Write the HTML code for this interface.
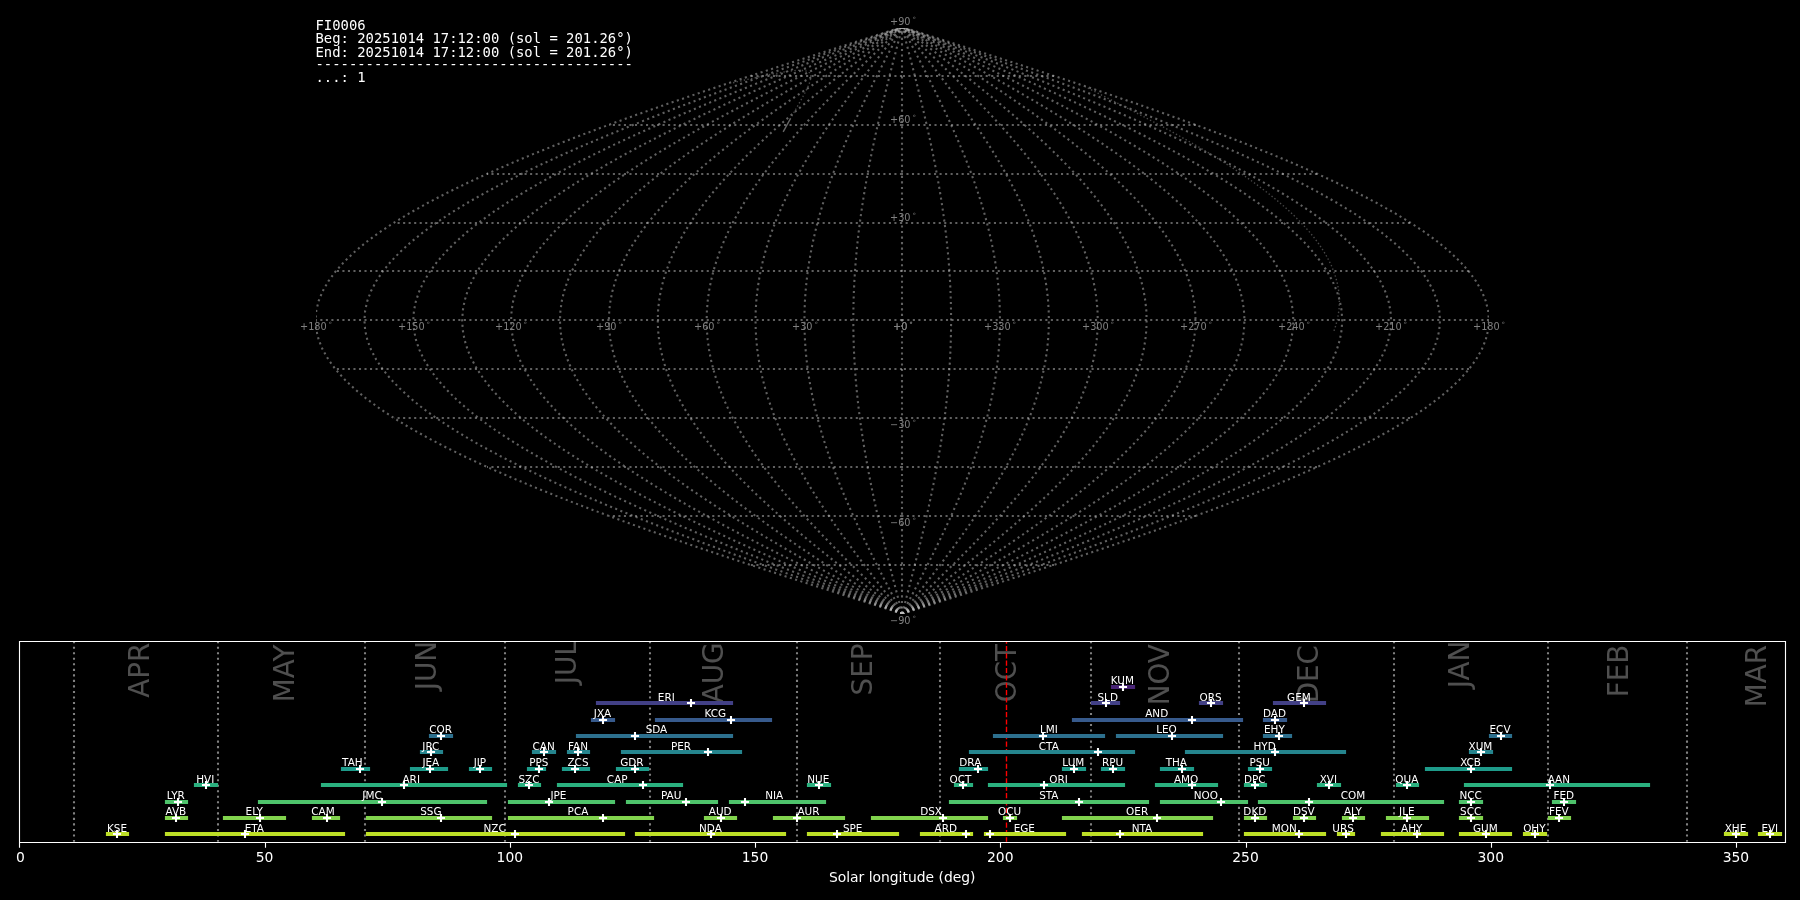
<!DOCTYPE html>
<html lang="en">
<head>
<meta charset="utf-8">
<title>FI0006 shower association</title>
<style>
html,body{margin:0;padding:0;background:#000;}
body{width:1800px;height:900px;overflow:hidden;}
svg{display:block;will-change:transform;}
text{font-family:"DejaVu Sans","Liberation Sans",sans-serif;}
.mono text{font-family:"DejaVu Sans Mono","Liberation Mono",monospace;}
</style>
</head>
<body>
<svg width="1800" height="900" viewBox="0 0 1800 900" role="img" aria-label="All-sky shower association plot for station FI0006 with yearly meteor shower activity diagram">
<rect width="1800" height="900" fill="#000"/>
<clipPath id="skyclip"><rect x="316" y="28" width="1173" height="586"/></clipPath>
<g id="grid" clip-path="url(#skyclip)" fill="none" stroke="#c0c0c0" stroke-opacity="0.5" stroke-width="2.083" stroke-dasharray="2.083 3.437">
<path d="M902 614V27"/>
<polyline points="902.2,613.73 899.64,603.95 897.09,594.17 894.55,584.39 892.03,574.61 889.55,564.84 887.09,555.06 884.68,545.28 882.31,535.5 880,525.72 877.75,515.94 875.57,506.17 873.46,496.39 871.43,486.61 869.49,476.83 867.63,467.05 865.87,457.27 864.2,447.5 862.65,437.72 861.2,427.94 859.86,418.16 858.64,408.38 857.54,398.61 856.56,388.83 855.7,379.05 854.97,369.27 854.38,359.49 853.91,349.71 853.58,339.94 853.38,330.16 853.31,320.38 853.38,310.6 853.58,300.82 853.91,291.05 854.38,281.27 854.97,271.49 855.7,261.71 856.56,251.93 857.54,242.15 858.64,232.38 859.86,222.6 861.2,212.82 862.65,203.04 864.2,193.26 865.87,183.49 867.63,173.71 869.49,163.93 871.43,154.15 873.46,144.37 875.57,134.59 877.75,124.82 880,115.04 882.31,105.26 884.68,95.48 887.09,85.7 889.55,75.93 892.03,66.15 894.55,56.37 897.09,46.59 899.64,36.81 902.2,27.03"/>
<polyline points="902.2,613.73 897.08,603.95 891.98,594.17 886.9,584.39 881.87,574.61 876.89,564.84 871.98,555.06 867.16,545.28 862.43,535.5 857.81,525.72 853.31,515.94 848.94,506.17 844.73,496.39 840.66,486.61 836.77,476.83 833.06,467.05 829.53,457.27 826.21,447.5 823.09,437.72 820.19,427.94 817.52,418.16 815.08,408.38 812.87,398.61 810.91,388.83 809.2,379.05 807.75,369.27 806.55,359.49 805.62,349.71 804.95,339.94 804.55,330.16 804.42,320.38 804.55,310.6 804.95,300.82 805.62,291.05 806.55,281.27 807.75,271.49 809.2,261.71 810.91,251.93 812.87,242.15 815.08,232.38 817.52,222.6 820.19,212.82 823.09,203.04 826.21,193.26 829.53,183.49 833.06,173.71 836.77,163.93 840.66,154.15 844.73,144.37 848.94,134.59 853.31,124.82 857.81,115.04 862.43,105.26 867.16,95.48 871.98,85.7 876.89,75.93 881.87,66.15 886.9,56.37 891.98,46.59 897.08,36.81 902.2,27.03"/>
<polyline points="902.2,613.73 894.52,603.95 886.87,594.17 879.26,584.39 871.7,574.61 864.24,564.84 856.88,555.06 849.64,545.28 842.54,535.5 835.61,525.72 828.86,515.94 822.32,506.17 815.99,496.39 809.9,486.61 804.06,476.83 798.49,467.05 793.2,457.27 788.21,447.5 783.54,437.72 779.19,427.94 775.18,418.16 771.51,408.38 768.21,398.61 765.27,388.83 762.71,379.05 760.52,369.27 758.73,359.49 757.33,349.71 756.33,339.94 755.73,330.16 755.53,320.38 755.73,310.6 756.33,300.82 757.33,291.05 758.73,281.27 760.52,271.49 762.71,261.71 765.27,251.93 768.21,242.15 771.51,232.38 775.18,222.6 779.19,212.82 783.54,203.04 788.21,193.26 793.2,183.49 798.49,173.71 804.06,163.93 809.9,154.15 815.99,144.37 822.32,134.59 828.86,124.82 835.61,115.04 842.54,105.26 849.64,95.48 856.88,85.7 864.24,75.93 871.7,66.15 879.26,56.37 886.87,46.59 894.52,36.81 902.2,27.03"/>
<polyline points="902.2,613.73 891.96,603.95 881.76,594.17 871.61,584.39 861.54,574.61 851.58,564.84 841.77,555.06 832.12,545.28 822.66,535.5 813.42,525.72 804.42,515.94 795.69,506.17 787.25,496.39 779.13,486.61 771.34,476.83 763.92,467.05 756.87,457.27 750.22,447.5 743.99,437.72 738.19,427.94 732.84,418.16 727.95,408.38 723.54,398.61 719.63,388.83 716.21,379.05 713.3,369.27 710.91,359.49 709.04,349.71 707.71,339.94 706.9,330.16 706.64,320.38 706.9,310.6 707.71,300.82 709.04,291.05 710.91,281.27 713.3,271.49 716.21,261.71 719.63,251.93 723.54,242.15 727.95,232.38 732.84,222.6 738.19,212.82 743.99,203.04 750.22,193.26 756.87,183.49 763.92,173.71 771.34,163.93 779.13,154.15 787.25,144.37 795.69,134.59 804.42,124.82 813.42,115.04 822.66,105.26 832.12,95.48 841.77,85.7 851.58,75.93 861.54,66.15 871.61,56.37 881.76,46.59 891.96,36.81 902.2,27.03"/>
<polyline points="902.2,613.73 889.41,603.95 876.65,594.17 863.96,584.39 851.37,574.61 838.93,564.84 826.66,555.06 814.6,545.28 802.77,535.5 791.22,525.72 779.97,515.94 769.06,506.17 758.51,496.39 748.36,486.61 738.63,476.83 729.34,467.05 720.53,457.27 712.22,447.5 704.43,437.72 697.18,427.94 690.5,418.16 684.39,408.38 678.88,398.61 673.98,388.83 669.71,379.05 666.07,369.27 663.09,359.49 660.75,349.71 659.08,339.94 658.08,330.16 657.75,320.38 658.08,310.6 659.08,300.82 660.75,291.05 663.09,281.27 666.07,271.49 669.71,261.71 673.98,251.93 678.88,242.15 684.39,232.38 690.5,222.6 697.18,212.82 704.43,203.04 712.22,193.26 720.53,183.49 729.34,173.71 738.63,163.93 748.36,154.15 758.51,144.37 769.06,134.59 779.97,124.82 791.22,115.04 802.77,105.26 814.6,95.48 826.66,85.7 838.93,75.93 851.37,66.15 863.96,56.37 876.65,46.59 889.41,36.81 902.2,27.03"/>
<polyline points="902.2,613.73 886.85,603.95 871.54,594.17 856.31,584.39 841.21,574.61 826.28,564.84 811.55,555.06 797.07,545.28 782.89,535.5 769.02,525.72 755.53,515.94 742.43,506.17 729.78,496.39 717.59,486.61 705.91,476.83 694.77,467.05 684.2,457.27 674.23,447.5 664.88,437.72 656.18,427.94 648.15,418.16 640.83,408.38 634.22,398.61 628.34,388.83 623.21,379.05 618.85,369.27 615.26,359.49 612.47,349.71 610.46,339.94 609.26,330.16 608.85,320.38 609.26,310.6 610.46,300.82 612.47,291.05 615.26,281.27 618.85,271.49 623.21,261.71 628.34,251.93 634.22,242.15 640.83,232.38 648.15,222.6 656.18,212.82 664.88,203.04 674.23,193.26 684.2,183.49 694.77,173.71 705.91,163.93 717.59,154.15 729.78,144.37 742.43,134.59 755.53,124.82 769.02,115.04 782.89,105.26 797.07,95.48 811.55,85.7 826.28,75.93 841.21,66.15 856.31,56.37 871.54,46.59 886.85,36.81 902.2,27.03"/>
<polyline points="902.2,613.73 884.29,603.95 866.43,594.17 848.66,584.39 831.04,574.61 813.62,564.84 796.44,555.06 779.55,545.28 763,535.5 746.83,525.72 731.08,515.94 715.8,506.17 701.04,496.39 686.82,486.61 673.2,476.83 660.2,467.05 647.87,457.27 636.23,447.5 625.32,437.72 615.18,427.94 605.81,418.16 597.26,408.38 589.55,398.61 582.69,388.83 576.71,379.05 571.62,369.27 567.44,359.49 564.18,349.71 561.84,339.94 560.43,330.16 559.96,320.38 560.43,310.6 561.84,300.82 564.18,291.05 567.44,281.27 571.62,271.49 576.71,261.71 582.69,251.93 589.55,242.15 597.26,232.38 605.81,222.6 615.18,212.82 625.32,203.04 636.23,193.26 647.87,183.49 660.2,173.71 673.2,163.93 686.82,154.15 701.04,144.37 715.8,134.59 731.08,124.82 746.83,115.04 763,105.26 779.55,95.48 796.44,85.7 813.62,75.93 831.04,66.15 848.66,56.37 866.43,46.59 884.29,36.81 902.2,27.03"/>
<polyline points="902.2,613.73 881.73,603.95 861.32,594.17 841.01,584.39 820.88,574.61 800.97,564.84 781.33,555.06 762.03,545.28 743.11,535.5 724.63,525.72 706.64,515.94 689.18,506.17 672.3,496.39 656.06,486.61 640.48,476.83 625.63,467.05 611.54,457.27 598.24,447.5 585.77,437.72 574.17,427.94 563.47,418.16 553.7,408.38 544.89,398.61 537.05,388.83 530.22,379.05 524.4,369.27 519.62,359.49 515.89,349.71 513.21,339.94 511.61,330.16 511.07,320.38 511.61,310.6 513.21,300.82 515.89,291.05 519.62,281.27 524.4,271.49 530.22,261.71 537.05,251.93 544.89,242.15 553.7,232.38 563.47,222.6 574.17,212.82 585.77,203.04 598.24,193.26 611.54,183.49 625.63,173.71 640.48,163.93 656.06,154.15 672.3,144.37 689.18,134.59 706.64,124.82 724.63,115.04 743.11,105.26 762.03,95.48 781.33,85.7 800.97,75.93 820.88,66.15 841.01,56.37 861.32,46.59 881.73,36.81 902.2,27.03"/>
<polyline points="902.2,613.73 879.17,603.95 856.21,594.17 833.37,584.39 810.71,574.61 788.31,564.84 766.23,555.06 744.51,545.28 723.23,535.5 702.44,525.72 682.19,515.94 662.55,506.17 643.56,496.39 625.29,486.61 607.77,476.83 591.06,467.05 575.2,457.27 560.24,447.5 546.22,437.72 533.17,427.94 521.13,418.16 510.14,408.38 500.22,398.61 491.41,388.83 483.72,379.05 477.17,369.27 471.8,359.49 467.6,349.71 464.59,339.94 462.78,330.16 462.18,320.38 462.78,310.6 464.59,300.82 467.6,291.05 471.8,281.27 477.17,271.49 483.72,261.71 491.41,251.93 500.22,242.15 510.14,232.38 521.13,222.6 533.17,212.82 546.22,203.04 560.24,193.26 575.2,183.49 591.06,173.71 607.77,163.93 625.29,154.15 643.56,144.37 662.55,134.59 682.19,124.82 702.44,115.04 723.23,105.26 744.51,95.48 766.23,85.7 788.31,75.93 810.71,66.15 833.37,56.37 856.21,46.59 879.17,36.81 902.2,27.03"/>
<polyline points="902.2,613.73 876.61,603.95 851.09,594.17 825.72,584.39 800.55,574.61 775.66,564.84 751.12,555.06 726.99,545.28 703.34,535.5 680.24,525.72 657.75,515.94 635.92,506.17 614.83,496.39 594.52,486.61 575.06,476.83 556.49,467.05 538.87,457.27 522.25,447.5 506.66,437.72 492.17,427.94 478.79,418.16 466.58,408.38 455.56,398.61 445.76,388.83 437.22,379.05 429.95,369.27 423.97,359.49 419.31,349.71 415.97,339.94 413.96,330.16 413.29,320.38 413.96,310.6 415.97,300.82 419.31,291.05 423.97,281.27 429.95,271.49 437.22,261.71 445.76,251.93 455.56,242.15 466.58,232.38 478.79,222.6 492.17,212.82 506.66,203.04 522.25,193.26 538.87,183.49 556.49,173.71 575.06,163.93 594.52,154.15 614.83,144.37 635.92,134.59 657.75,124.82 680.24,115.04 703.34,105.26 726.99,95.48 751.12,85.7 775.66,75.93 800.55,66.15 825.72,56.37 851.09,46.59 876.61,36.81 902.2,27.03"/>
<polyline points="902.2,613.73 874.05,603.95 845.98,594.17 818.07,584.39 790.38,574.61 763.01,564.84 736.01,555.06 709.47,545.28 683.46,535.5 658.04,525.72 633.3,515.94 609.29,506.17 586.09,496.39 563.75,486.61 542.34,476.83 521.92,467.05 502.54,457.27 484.25,447.5 467.11,437.72 451.16,427.94 436.45,418.16 423.02,408.38 410.89,398.61 400.12,388.83 390.72,379.05 382.72,369.27 376.15,359.49 371.02,349.71 367.35,339.94 365.14,330.16 364.4,320.38 365.14,310.6 367.35,300.82 371.02,291.05 376.15,281.27 382.72,271.49 390.72,261.71 400.12,251.93 410.89,242.15 423.02,232.38 436.45,222.6 451.16,212.82 467.11,203.04 484.25,193.26 502.54,183.49 521.92,173.71 542.34,163.93 563.75,154.15 586.09,144.37 609.29,134.59 633.3,124.82 658.04,115.04 683.46,105.26 709.47,95.48 736.01,85.7 763.01,75.93 790.38,66.15 818.07,56.37 845.98,46.59 874.05,36.81 902.2,27.03"/>
<polyline points="902.2,613.73 871.49,603.95 840.87,594.17 810.42,584.39 780.22,574.61 750.35,564.84 720.9,555.06 691.95,545.28 663.57,535.5 635.85,525.72 608.85,515.94 582.66,506.17 557.35,496.39 532.98,486.61 509.63,476.83 487.35,467.05 466.2,457.27 446.25,447.5 427.56,437.72 410.16,427.94 394.11,418.16 379.45,408.38 366.23,398.61 354.48,388.83 344.22,379.05 335.5,369.27 328.33,359.49 322.73,349.71 318.72,339.94 316.31,330.16 315.51,320.38 316.31,310.6 318.72,300.82 322.73,291.05 328.33,281.27 335.5,271.49 344.22,261.71 354.48,251.93 366.23,242.15 379.45,232.38 394.11,222.6 410.16,212.82 427.56,203.04 446.25,193.26 466.2,183.49 487.35,173.71 509.63,163.93 532.98,154.15 557.35,144.37 582.66,134.59 608.85,124.82 635.85,115.04 663.57,105.26 691.95,95.48 720.9,85.7 750.35,75.93 780.22,66.15 810.42,56.37 840.87,46.59 871.49,36.81 902.2,27.03"/>
<polyline points="902.2,613.73 932.91,603.95 963.53,594.17 993.98,584.39 1024.18,574.61 1054.05,564.84 1083.5,555.06 1112.45,545.28 1140.83,535.5 1168.55,525.72 1195.55,515.94 1221.74,506.17 1247.05,496.39 1271.42,486.61 1294.77,476.83 1317.05,467.05 1338.2,457.27 1358.15,447.5 1376.84,437.72 1394.24,427.94 1410.29,418.16 1424.95,408.38 1438.17,398.61 1449.92,388.83 1460.18,379.05 1468.9,369.27 1476.07,359.49 1481.67,349.71 1485.68,339.94 1488.09,330.16 1488.89,320.38 1488.09,310.6 1485.68,300.82 1481.67,291.05 1476.07,281.27 1468.9,271.49 1460.18,261.71 1449.92,251.93 1438.17,242.15 1424.95,232.38 1410.29,222.6 1394.24,212.82 1376.84,203.04 1358.15,193.26 1338.2,183.49 1317.05,173.71 1294.77,163.93 1271.42,154.15 1247.05,144.37 1221.74,134.59 1195.55,124.82 1168.55,115.04 1140.83,105.26 1112.45,95.48 1083.5,85.7 1054.05,75.93 1024.18,66.15 993.98,56.37 963.53,46.59 932.91,36.81 902.2,27.03"/>
<polyline points="902.2,613.73 930.35,603.95 958.42,594.17 986.33,584.39 1014.02,574.61 1041.39,564.84 1068.39,555.06 1094.93,545.28 1120.94,535.5 1146.36,525.72 1171.1,515.94 1195.11,506.17 1218.31,496.39 1240.65,486.61 1262.06,476.83 1282.48,467.05 1301.86,457.27 1320.15,447.5 1337.29,437.72 1353.24,427.94 1367.95,418.16 1381.38,408.38 1393.51,398.61 1404.28,388.83 1413.68,379.05 1421.68,369.27 1428.25,359.49 1433.38,349.71 1437.05,339.94 1439.26,330.16 1440,320.38 1439.26,310.6 1437.05,300.82 1433.38,291.05 1428.25,281.27 1421.68,271.49 1413.68,261.71 1404.28,251.93 1393.51,242.15 1381.38,232.38 1367.95,222.6 1353.24,212.82 1337.29,203.04 1320.15,193.26 1301.86,183.49 1282.48,173.71 1262.06,163.93 1240.65,154.15 1218.31,144.37 1195.11,134.59 1171.1,124.82 1146.36,115.04 1120.94,105.26 1094.93,95.48 1068.39,85.7 1041.39,75.93 1014.02,66.15 986.33,56.37 958.42,46.59 930.35,36.81 902.2,27.03"/>
<polyline points="902.2,613.73 927.79,603.95 953.31,594.17 978.68,584.39 1003.85,574.61 1028.74,564.84 1053.28,555.06 1077.41,545.28 1101.06,535.5 1124.16,525.72 1146.66,515.94 1168.48,506.17 1189.57,496.39 1209.88,486.61 1229.34,476.83 1247.91,467.05 1265.53,457.27 1282.15,447.5 1297.74,437.72 1312.23,427.94 1325.61,418.16 1337.82,408.38 1348.84,398.61 1358.64,388.83 1367.18,379.05 1374.45,369.27 1380.43,359.49 1385.09,349.71 1388.43,339.94 1390.44,330.16 1391.11,320.38 1390.44,310.6 1388.43,300.82 1385.09,291.05 1380.43,281.27 1374.45,271.49 1367.18,261.71 1358.64,251.93 1348.84,242.15 1337.82,232.38 1325.61,222.6 1312.23,212.82 1297.74,203.04 1282.15,193.26 1265.53,183.49 1247.91,173.71 1229.34,163.93 1209.88,154.15 1189.57,144.37 1168.48,134.59 1146.66,124.82 1124.16,115.04 1101.06,105.26 1077.41,95.48 1053.28,85.7 1028.74,75.93 1003.85,66.15 978.68,56.37 953.31,46.59 927.79,36.81 902.2,27.03"/>
<polyline points="902.2,613.73 925.23,603.95 948.19,594.17 971.03,584.39 993.69,574.61 1016.09,564.84 1038.17,555.06 1059.89,545.28 1081.17,535.5 1101.96,525.72 1122.21,515.94 1141.85,506.17 1160.84,496.39 1179.11,486.61 1196.63,476.83 1213.34,467.05 1229.2,457.27 1244.16,447.5 1258.18,437.72 1271.23,427.94 1283.27,418.16 1294.26,408.38 1304.18,398.61 1312.99,388.83 1320.68,379.05 1327.23,369.27 1332.6,359.49 1336.8,349.71 1339.81,339.94 1341.62,330.16 1342.22,320.38 1341.62,310.6 1339.81,300.82 1336.8,291.05 1332.6,281.27 1327.23,271.49 1320.68,261.71 1312.99,251.93 1304.18,242.15 1294.26,232.38 1283.27,222.6 1271.23,212.82 1258.18,203.04 1244.16,193.26 1229.2,183.49 1213.34,173.71 1196.63,163.93 1179.11,154.15 1160.84,144.37 1141.85,134.59 1122.21,124.82 1101.96,115.04 1081.17,105.26 1059.89,95.48 1038.17,85.7 1016.09,75.93 993.69,66.15 971.03,56.37 948.19,46.59 925.23,36.81 902.2,27.03"/>
<polyline points="902.2,613.73 922.67,603.95 943.08,594.17 963.39,584.39 983.52,574.61 1003.43,564.84 1023.07,555.06 1042.37,545.28 1061.29,535.5 1079.77,525.72 1097.76,515.94 1115.22,506.17 1132.1,496.39 1148.34,486.61 1163.92,476.83 1178.77,467.05 1192.86,457.27 1206.16,447.5 1218.63,437.72 1230.23,427.94 1240.93,418.16 1250.7,408.38 1259.51,398.61 1267.35,388.83 1274.18,379.05 1280,369.27 1284.78,359.49 1288.51,349.71 1291.19,339.94 1292.79,330.16 1293.33,320.38 1292.79,310.6 1291.19,300.82 1288.51,291.05 1284.78,281.27 1280,271.49 1274.18,261.71 1267.35,251.93 1259.51,242.15 1250.7,232.38 1240.93,222.6 1230.23,212.82 1218.63,203.04 1206.16,193.26 1192.86,183.49 1178.77,173.71 1163.92,163.93 1148.34,154.15 1132.1,144.37 1115.22,134.59 1097.76,124.82 1079.77,115.04 1061.29,105.26 1042.37,95.48 1023.07,85.7 1003.43,75.93 983.52,66.15 963.39,56.37 943.08,46.59 922.67,36.81 902.2,27.03"/>
<polyline points="902.2,613.73 920.11,603.95 937.97,594.17 955.74,584.39 973.36,574.61 990.78,564.84 1007.96,555.06 1024.85,545.28 1041.4,535.5 1057.57,525.72 1073.32,515.94 1088.6,506.17 1103.36,496.39 1117.58,486.61 1131.2,476.83 1144.2,467.05 1156.53,457.27 1168.17,447.5 1179.08,437.72 1189.22,427.94 1198.59,418.16 1207.14,408.38 1214.85,398.61 1221.71,388.83 1227.69,379.05 1232.78,369.27 1236.96,359.49 1240.22,349.71 1242.56,339.94 1243.97,330.16 1244.44,320.38 1243.97,310.6 1242.56,300.82 1240.22,291.05 1236.96,281.27 1232.78,271.49 1227.69,261.71 1221.71,251.93 1214.85,242.15 1207.14,232.38 1198.59,222.6 1189.22,212.82 1179.08,203.04 1168.17,193.26 1156.53,183.49 1144.2,173.71 1131.2,163.93 1117.58,154.15 1103.36,144.37 1088.6,134.59 1073.32,124.82 1057.57,115.04 1041.4,105.26 1024.85,95.48 1007.96,85.7 990.78,75.93 973.36,66.15 955.74,56.37 937.97,46.59 920.11,36.81 902.2,27.03"/>
<polyline points="902.2,613.73 917.55,603.95 932.86,594.17 948.09,584.39 963.19,574.61 978.12,564.84 992.85,555.06 1007.33,545.28 1021.51,535.5 1035.38,525.72 1048.87,515.94 1061.97,506.17 1074.62,496.39 1086.81,486.61 1098.49,476.83 1109.63,467.05 1120.2,457.27 1130.17,447.5 1139.52,437.72 1148.22,427.94 1156.25,418.16 1163.57,408.38 1170.18,398.61 1176.06,388.83 1181.19,379.05 1185.55,369.27 1189.14,359.49 1191.93,349.71 1193.94,339.94 1195.14,330.16 1195.55,320.38 1195.14,310.6 1193.94,300.82 1191.93,291.05 1189.14,281.27 1185.55,271.49 1181.19,261.71 1176.06,251.93 1170.18,242.15 1163.57,232.38 1156.25,222.6 1148.22,212.82 1139.52,203.04 1130.17,193.26 1120.2,183.49 1109.63,173.71 1098.49,163.93 1086.81,154.15 1074.62,144.37 1061.97,134.59 1048.87,124.82 1035.38,115.04 1021.51,105.26 1007.33,95.48 992.85,85.7 978.12,75.93 963.19,66.15 948.09,56.37 932.86,46.59 917.55,36.81 902.2,27.03"/>
<polyline points="902.2,613.73 914.99,603.95 927.75,594.17 940.44,584.39 953.03,574.61 965.47,564.84 977.74,555.06 989.8,545.28 1001.63,535.5 1013.18,525.72 1024.43,515.94 1035.34,506.17 1045.89,496.39 1056.04,486.61 1065.77,476.83 1075.06,467.05 1083.87,457.27 1092.18,447.5 1099.97,437.72 1107.22,427.94 1113.9,418.16 1120.01,408.38 1125.52,398.61 1130.42,388.83 1134.69,379.05 1138.33,369.27 1141.31,359.49 1143.65,349.71 1145.32,339.94 1146.32,330.16 1146.65,320.38 1146.32,310.6 1145.32,300.82 1143.65,291.05 1141.31,281.27 1138.33,271.49 1134.69,261.71 1130.42,251.93 1125.52,242.15 1120.01,232.38 1113.9,222.6 1107.22,212.82 1099.97,203.04 1092.18,193.26 1083.87,183.49 1075.06,173.71 1065.77,163.93 1056.04,154.15 1045.89,144.37 1035.34,134.59 1024.43,124.82 1013.18,115.04 1001.63,105.26 989.8,95.48 977.74,85.7 965.47,75.93 953.03,66.15 940.44,56.37 927.75,46.59 914.99,36.81 902.2,27.03"/>
<polyline points="902.2,613.73 912.44,603.95 922.64,594.17 932.79,584.39 942.86,574.61 952.82,564.84 962.63,555.06 972.28,545.28 981.74,535.5 990.98,525.72 999.98,515.94 1008.71,506.17 1017.15,496.39 1025.27,486.61 1033.06,476.83 1040.48,467.05 1047.53,457.27 1054.18,447.5 1060.41,437.72 1066.21,427.94 1071.56,418.16 1076.45,408.38 1080.86,398.61 1084.77,388.83 1088.19,379.05 1091.1,369.27 1093.49,359.49 1095.36,349.71 1096.69,339.94 1097.5,330.16 1097.76,320.38 1097.5,310.6 1096.69,300.82 1095.36,291.05 1093.49,281.27 1091.1,271.49 1088.19,261.71 1084.77,251.93 1080.86,242.15 1076.45,232.38 1071.56,222.6 1066.21,212.82 1060.41,203.04 1054.18,193.26 1047.53,183.49 1040.48,173.71 1033.06,163.93 1025.27,154.15 1017.15,144.37 1008.71,134.59 999.98,124.82 990.98,115.04 981.74,105.26 972.28,95.48 962.63,85.7 952.82,75.93 942.86,66.15 932.79,56.37 922.64,46.59 912.44,36.81 902.2,27.03"/>
<polyline points="902.2,613.73 909.88,603.95 917.53,594.17 925.14,584.39 932.7,574.61 940.16,564.84 947.52,555.06 954.76,545.28 961.86,535.5 968.79,525.72 975.54,515.94 982.08,506.17 988.41,496.39 994.5,486.61 1000.34,476.83 1005.91,467.05 1011.2,457.27 1016.19,447.5 1020.86,437.72 1025.21,427.94 1029.22,418.16 1032.89,408.38 1036.19,398.61 1039.13,388.83 1041.69,379.05 1043.88,369.27 1045.67,359.49 1047.07,349.71 1048.07,339.94 1048.67,330.16 1048.87,320.38 1048.67,310.6 1048.07,300.82 1047.07,291.05 1045.67,281.27 1043.88,271.49 1041.69,261.71 1039.13,251.93 1036.19,242.15 1032.89,232.38 1029.22,222.6 1025.21,212.82 1020.86,203.04 1016.19,193.26 1011.2,183.49 1005.91,173.71 1000.34,163.93 994.5,154.15 988.41,144.37 982.08,134.59 975.54,124.82 968.79,115.04 961.86,105.26 954.76,95.48 947.52,85.7 940.16,75.93 932.7,66.15 925.14,56.37 917.53,46.59 909.88,36.81 902.2,27.03"/>
<polyline points="902.2,613.73 907.32,603.95 912.42,594.17 917.5,584.39 922.53,574.61 927.51,564.84 932.42,555.06 937.24,545.28 941.97,535.5 946.59,525.72 951.09,515.94 955.46,506.17 959.67,496.39 963.74,486.61 967.63,476.83 971.34,467.05 974.87,457.27 978.19,447.5 981.31,437.72 984.21,427.94 986.88,418.16 989.32,408.38 991.53,398.61 993.49,388.83 995.2,379.05 996.65,369.27 997.85,359.49 998.78,349.71 999.45,339.94 999.85,330.16 999.98,320.38 999.85,310.6 999.45,300.82 998.78,291.05 997.85,281.27 996.65,271.49 995.2,261.71 993.49,251.93 991.53,242.15 989.32,232.38 986.88,222.6 984.21,212.82 981.31,203.04 978.19,193.26 974.87,183.49 971.34,173.71 967.63,163.93 963.74,154.15 959.67,144.37 955.46,134.59 951.09,124.82 946.59,115.04 941.97,105.26 937.24,95.48 932.42,85.7 927.51,75.93 922.53,66.15 917.5,56.37 912.42,46.59 907.32,36.81 902.2,27.03"/>
<polyline points="902.2,613.73 904.76,603.95 907.31,594.17 909.85,584.39 912.37,574.61 914.85,564.84 917.31,555.06 919.72,545.28 922.09,535.5 924.4,525.72 926.65,515.94 928.83,506.17 930.94,496.39 932.97,486.61 934.91,476.83 936.77,467.05 938.53,457.27 940.2,447.5 941.75,437.72 943.2,427.94 944.54,418.16 945.76,408.38 946.86,398.61 947.84,388.83 948.7,379.05 949.43,369.27 950.02,359.49 950.49,349.71 950.82,339.94 951.02,330.16 951.09,320.38 951.02,310.6 950.82,300.82 950.49,291.05 950.02,281.27 949.43,271.49 948.7,261.71 947.84,251.93 946.86,242.15 945.76,232.38 944.54,222.6 943.2,212.82 941.75,203.04 940.2,193.26 938.53,183.49 936.77,173.71 934.91,163.93 932.97,154.15 930.94,144.37 928.83,134.59 926.65,124.82 924.4,115.04 922.09,105.26 919.72,95.48 917.31,85.7 914.85,75.93 912.37,66.15 909.85,56.37 907.31,46.59 904.76,36.81 902.2,27.03"/>
<path d="M902 565H750"/>
<path d="M1054 565H902"/>
<path d="M902 516H609"/>
<path d="M1196 516H902"/>
<path d="M902 467H487"/>
<path d="M1317 467H902"/>
<path d="M902 418H394"/>
<path d="M1410 418H902"/>
<path d="M902 369H335"/>
<path d="M1469 369H902"/>
<path d="M902 320H316"/>
<path d="M1489 320H902"/>
<path d="M902 271H335"/>
<path d="M1469 271H902"/>
<path d="M902 223H394"/>
<path d="M1410 223H902"/>
<path d="M902 174H487"/>
<path d="M1317 174H902"/>
<path d="M902 125H609"/>
<path d="M1196 125H902"/>
<path d="M902 76H750"/>
<path d="M1054 76H902"/>
</g>
<g id="meteor" fill="none" stroke="#666666">
<polyline stroke-opacity="0.7" stroke-width="1.389" stroke-dasharray="1.389 2.292" points="1334,330.87 1335.81,325.42 1337.25,319.97 1338.33,314.53 1339.03,309.08 1339.36,303.63 1339.32,298.19 1338.9,292.74 1338.12,287.3 1336.97,281.86 1335.45,276.42 1333.56,270.98 1331.31,265.54 1328.7,260.11 1325.73,254.68 1322.4,249.26 1318.73,243.84 1314.7,238.42 1310.34,233.01 1305.64,227.61 1300.61,222.21 1295.26,216.81 1289.59,211.43 1283.61,206.05 1277.32,200.68 1270.75,195.33 1263.88,189.98 1256.75,184.65 1249.35,179.33 1241.69,174.03 1233.8,168.74 1225.67,163.48 1217.34,158.23 1208.8,153.01 1200.09,147.82 1191.22,142.67 1182.2,137.55 1173.08,132.47 1163.86,127.44 1154.6,122.47 1145.31,117.56 1136.05,112.73 1126.87,107.99 1117.84,103.36 1109.01,98.86 1100.5,94.52 1092.42,90.37 1084.9,86.44"/>
<polyline stroke-opacity="0.7" stroke-width="1.389" stroke-dasharray="1.389 2.292" points="733.02,82.78 747.19,79.47 760.26,76.55 772.02,74.1 782.32,72.21 791,70.94 798,70.35 803.33,70.47 807.1,71.28 809.48,72.76 810.66,74.84 810.87,77.45 810.3,80.51 809.14,83.94 807.5,87.69 805.52,91.7 803.28,95.92 800.85,100.32 798.28,104.86 795.62,109.53 792.91,114.3 790.17,119.15"/>
<path stroke-width="1.389" stroke-linecap="square" d="M790.17 119.15L783.48 131.32"/>
</g>
<g id="gridlabels" fill="#808080" font-size="9.72">
<text x="890" y="624">−90<tspan dx="1.4" dy="-5" font-size="7.2">∘</tspan></text>
<text x="890" y="526">−60<tspan dx="1.4" dy="-5" font-size="7.2">∘</tspan></text>
<text x="890" y="428">−30<tspan dx="1.4" dy="-5" font-size="7.2">∘</tspan></text>
<text x="893" y="330">+0<tspan dx="1.4" dy="-5" font-size="7.2">∘</tspan></text>
<text x="890" y="221">+30<tspan dx="1.4" dy="-5" font-size="7.2">∘</tspan></text>
<text x="890" y="123">+60<tspan dx="1.4" dy="-5" font-size="7.2">∘</tspan></text>
<text x="890" y="25">+90<tspan dx="1.4" dy="-5" font-size="7.2">∘</tspan></text>
<text x="893" y="330">+0<tspan dx="1.4" dy="-5" font-size="7.2">∘</tspan></text>
<text x="792" y="330">+30<tspan dx="1.4" dy="-5" font-size="7.2">∘</tspan></text>
<text x="694" y="330">+60<tspan dx="1.4" dy="-5" font-size="7.2">∘</tspan></text>
<text x="596" y="330">+90<tspan dx="1.4" dy="-5" font-size="7.2">∘</tspan></text>
<text x="495" y="330">+120<tspan dx="1.4" dy="-5" font-size="7.2">∘</tspan></text>
<text x="398" y="330">+150<tspan dx="1.4" dy="-5" font-size="7.2">∘</tspan></text>
<text x="300" y="330">+180<tspan dx="1.4" dy="-5" font-size="7.2">∘</tspan></text>
<text x="1375" y="330">+210<tspan dx="1.4" dy="-5" font-size="7.2">∘</tspan></text>
<text x="1278" y="330">+240<tspan dx="1.4" dy="-5" font-size="7.2">∘</tspan></text>
<text x="1180" y="330">+270<tspan dx="1.4" dy="-5" font-size="7.2">∘</tspan></text>
<text x="1082" y="330">+300<tspan dx="1.4" dy="-5" font-size="7.2">∘</tspan></text>
<text x="984" y="330">+330<tspan dx="1.4" dy="-5" font-size="7.2">∘</tspan></text>
<text x="1473" y="330">+180<tspan dx="1.4" dy="-5" font-size="7.2">∘</tspan></text>
</g>
<g id="info" class="mono" fill="#ffffff" font-size="13.89" xml:space="preserve">
<text x="315.5" y="30">FI0006</text>
<text x="315.5" y="43">Beg: 20251014 17:12:00 (sol = 201.26°)</text>
<text x="315.5" y="57">End: 20251014 17:12:00 (sol = 201.26°)</text>
<text x="315.5" y="69">--------------------------------------</text>
<text x="315.5" y="82">...: 1</text>
</g>
<clipPath id="axclip"><rect x="19.38" y="641" width="1765.62" height="200.72"/></clipPath>
<g id="activity" clip-path="url(#axclip)">
<g fill="none" stroke="#ffffff" stroke-opacity="0.5" stroke-width="2.083" stroke-dasharray="2.083 3.437">
<path d="M74 842V641"/>
<path d="M218 842V641"/>
<path d="M365 842V641"/>
<path d="M505 842V641"/>
<path d="M650 842V641"/>
<path d="M797 842V641"/>
<path d="M940 842V641"/>
<path d="M1091 842V641"/>
<path d="M1239 842V641"/>
<path d="M1394 842V641"/>
<path d="M1548 842V641"/>
<path d="M1687 842V641"/>
</g>
<g id="months" fill="#ffffff" fill-opacity="0.31" font-size="27.78">
<text transform="translate(149 697.82) rotate(-90)">APR</text>
<text transform="translate(294 702.32) rotate(-90)">MAY</text>
<text transform="translate(436 690.16) rotate(-90)">JUN</text>
<text transform="translate(576 684.16) rotate(-90)">JUL</text>
<text transform="translate(723 703.32) rotate(-90)">AUG</text>
<text transform="translate(872 695.43) rotate(-90)">SEP</text>
<text transform="translate(1016 702.16) rotate(-90)">OCT</text>
<text transform="translate(1169 705.32) rotate(-90)">NOV</text>
<text transform="translate(1318 703.32) rotate(-90)">DEC</text>
<text transform="translate(1469 688.16) rotate(-90)">JAN</text>
<text transform="translate(1628 697.32) rotate(-90)">FEB</text>
<text transform="translate(1766 707.32) rotate(-90)">MAR</text>
</g>
<path fill="none" stroke="#ff0000" stroke-width="1.389" stroke-dasharray="5.139 2.222" d="M1006.5 842.4V641"/>
<path fill="none" stroke="#bddf26" stroke-width="4.167" d="M105.917 834H129.083M164.917 834H345.083M365.917 834H625.083M634.917 834H786.083M806.917 834H899.083M919.917 834H973.083M983.917 834H1066.083M1081.917 834H1203.083M1243.917 834H1326.083M1336.917 834H1355.083M1380.917 834H1444.083M1458.917 834H1512.083M1522.917 834H1547.083M1723.917 834H1748.083M1757.917 834H1782.083"/>
<path fill="none" stroke="#81d34d" stroke-width="4.167" d="M164.917 818H188.083M222.917 818H286.083M311.917 818H340.083M365.917 818H492.083M507.917 818H654.083M703.917 818H737.083M772.917 818H845.083M870.917 818H988.083M1002.917 818H1017.083M1061.917 818H1213.083M1243.917 818H1267.083M1292.917 818H1316.083M1341.917 818H1365.083M1385.917 818H1429.083M1458.917 818H1483.083M1547.917 818H1571.083"/>
<path fill="none" stroke="#4ec36b" stroke-width="4.167" d="M164.917 802H188.083M257.917 802H487.083M507.917 802H615.083M625.917 802H718.083M728.917 802H826.083M948.917 802H1149.083M1159.917 802H1248.083M1257.917 802H1444.083M1458.917 802H1483.083M1551.917 802H1576.083"/>
<path fill="none" stroke="#2ab07f" stroke-width="4.167" d="M193.917 785H218.083M320.917 785H507.083M517.917 785H541.083M556.917 785H683.083M806.917 785H831.083M953.917 785H973.083M987.917 785H1125.083M1154.917 785H1218.083M1243.917 785H1267.083M1316.917 785H1341.083M1395.917 785H1419.083M1463.917 785H1650.083"/>
<path fill="none" stroke="#1e9b8a" stroke-width="4.167" d="M340.917 769H370.083M409.917 769H448.083M468.917 769H492.083M526.917 769H546.083M561.917 769H590.083M615.917 769H649.083M958.917 769H988.083M1061.917 769H1086.083M1100.917 769H1125.083M1159.917 769H1194.083M1247.917 769H1272.083M1424.917 769H1512.083"/>
<path fill="none" stroke="#25858e" stroke-width="4.167" d="M419.917 752H443.083M531.917 752H556.083M566.917 752H590.083M620.917 752H742.083M968.917 752H1135.083M1184.917 752H1346.083M1468.917 752H1493.083"/>
<path fill="none" stroke="#2d708e" stroke-width="4.167" d="M428.917 736H453.083M575.917 736H733.083M992.917 736H1105.083M1115.917 736H1223.083M1262.917 736H1292.083M1488.917 736H1512.083"/>
<path fill="none" stroke="#375a8c" stroke-width="4.167" d="M590.917 720H615.083M654.917 720H772.083M1071.917 720H1243.083M1262.917 720H1287.083"/>
<path fill="none" stroke="#424086" stroke-width="4.167" d="M595.917 703H733.083M1090.917 703H1120.083M1198.917 703H1223.083M1272.917 703H1326.083"/>
<path fill="none" stroke="#482475" stroke-width="4.167" d="M1110.917 687H1135.083"/>
<g id="codes" fill="#ffffff" font-size="10.45" text-anchor="middle">
<text x="116.97" y="832">KSE</text>
<text x="254.3" y="832">ETA</text>
<text x="494.62" y="832">NZC</text>
<text x="710.41" y="832">NDA</text>
<text x="852.64" y="832">SPE</text>
<text x="945.83" y="832">ARD</text>
<text x="1024.3" y="832">EGE</text>
<text x="1142.01" y="832">NTA</text>
<text x="1284.24" y="832">MON</text>
<text x="1343.1" y="832">URS</text>
<text x="1411.76" y="832">AHY</text>
<text x="1485.33" y="832">GUM</text>
<text x="1534.37" y="832">OHY</text>
<text x="1735.46" y="832">XHE</text>
<text x="1769.79" y="832">EVI</text>
<text x="175.82" y="815">AVB</text>
<text x="254.3" y="815">ELY</text>
<text x="322.96" y="815">CAM</text>
<text x="430.86" y="815">SSG</text>
<text x="577.99" y="815">PCA</text>
<text x="720.22" y="815">AUD</text>
<text x="808.5" y="815">AUR</text>
<text x="931.12" y="815">DSX</text>
<text x="1009.59" y="815">OCU</text>
<text x="1137.11" y="815">OER</text>
<text x="1254.81" y="815">DKD</text>
<text x="1303.86" y="815">DSV</text>
<text x="1352.9" y="815">ALY</text>
<text x="1406.85" y="815">JLE</text>
<text x="1470.61" y="815">SCC</text>
<text x="1558.89" y="815">FEV</text>
<text x="175.82" y="799">LYR</text>
<text x="372" y="799">JMC</text>
<text x="558.38" y="799">JPE</text>
<text x="671.18" y="799">PAU</text>
<text x="774.17" y="799">NIA</text>
<text x="1048.83" y="799">STA</text>
<text x="1205.77" y="799">NOO</text>
<text x="1352.9" y="799">COM</text>
<text x="1470.61" y="799">NCC</text>
<text x="1563.8" y="799">FED</text>
<text x="205.25" y="783">HVI</text>
<text x="411.24" y="783">ARI</text>
<text x="528.95" y="783">SZC</text>
<text x="617.23" y="783">CAP</text>
<text x="818.31" y="783">NUE</text>
<text x="960.54" y="783">OCT</text>
<text x="1058.63" y="783">ORI</text>
<text x="1186.15" y="783">AMO</text>
<text x="1254.81" y="783">DPC</text>
<text x="1328.38" y="783">XVI</text>
<text x="1406.85" y="783">QUA</text>
<text x="1558.89" y="783">AAN</text>
<text x="352.39" y="766">TAH</text>
<text x="430.86" y="766">JEA</text>
<text x="479.9" y="766">JIP</text>
<text x="538.76" y="766">PPS</text>
<text x="577.99" y="766">ZCS</text>
<text x="631.94" y="766">GDR</text>
<text x="970.35" y="766">DRA</text>
<text x="1073.35" y="766">LUM</text>
<text x="1112.58" y="766">RPU</text>
<text x="1176.34" y="766">THA</text>
<text x="1259.72" y="766">PSU</text>
<text x="1470.61" y="766">XCB</text>
<text x="430.86" y="750">JRC</text>
<text x="543.66" y="750">CAN</text>
<text x="577.99" y="750">FAN</text>
<text x="680.99" y="750">PER</text>
<text x="1048.83" y="750">CTA</text>
<text x="1264.62" y="750">HYD</text>
<text x="1480.42" y="750">XUM</text>
<text x="440.67" y="733">COR</text>
<text x="656.46" y="733">SDA</text>
<text x="1048.83" y="733">LMI</text>
<text x="1166.53" y="733">LEO</text>
<text x="1274.43" y="733">EHY</text>
<text x="1500.04" y="733">ECV</text>
<text x="602.52" y="717">JXA</text>
<text x="715.32" y="717">KCG</text>
<text x="1156.72" y="717">AND</text>
<text x="1274.43" y="717">DAD</text>
<text x="666.27" y="701">ERI</text>
<text x="1107.68" y="701">SLD</text>
<text x="1210.67" y="701">ORS</text>
<text x="1298.95" y="701">GEM</text>
<text x="1122.39" y="684">KUM</text>
</g>
<path id="peaks" fill="none" stroke="#ffffff" stroke-width="2.083" d="M112.96 834h8.08M117 829.96v8.08M240.96 834h8.08M245 829.96v8.08M510.96 834h8.08M515 829.96v8.08M706.96 834h8.08M711 829.96v8.08M832.96 834h8.08M837 829.96v8.08M961.96 834h8.08M966 829.96v8.08M985.96 834h8.08M990 829.96v8.08M1115.96 834h8.08M1120 829.96v8.08M1294.96 834h8.08M1299 829.96v8.08M1341.96 834h8.08M1346 829.96v8.08M1412.96 834h8.08M1417 829.96v8.08M1481.96 834h8.08M1486 829.96v8.08M1530.96 834h8.08M1535 829.96v8.08M1731.96 834h8.08M1736 829.96v8.08M1765.96 834h8.08M1770 829.96v8.08M171.96 818h8.08M176 813.96v8.08M255.96 818h8.08M260 813.96v8.08M322.96 818h8.08M327 813.96v8.08M436.96 818h8.08M441 813.96v8.08M598.96 818h8.08M603 813.96v8.08M716.96 818h8.08M721 813.96v8.08M792.96 818h8.08M797 813.96v8.08M938.96 818h8.08M943 813.96v8.08M1005.96 818h8.08M1010 813.96v8.08M1152.96 818h8.08M1157 813.96v8.08M1250.96 818h8.08M1255 813.96v8.08M1299.96 818h8.08M1304 813.96v8.08M1348.96 818h8.08M1353 813.96v8.08M1402.96 818h8.08M1407 813.96v8.08M1466.96 818h8.08M1471 813.96v8.08M1554.96 818h8.08M1559 813.96v8.08M173.96 802h8.08M178 797.96v8.08M377.96 802h8.08M382 797.96v8.08M544.96 802h8.08M549 797.96v8.08M681.96 802h8.08M686 797.96v8.08M740.96 802h8.08M745 797.96v8.08M1074.96 802h8.08M1079 797.96v8.08M1216.96 802h8.08M1221 797.96v8.08M1304.96 802h8.08M1309 797.96v8.08M1466.96 802h8.08M1471 797.96v8.08M1559.96 802h8.08M1564 797.96v8.08M201.96 785h8.08M206 780.96v8.08M399.96 785h8.08M404 780.96v8.08M524.96 785h8.08M529 780.96v8.08M638.96 785h8.08M643 780.96v8.08M814.96 785h8.08M819 780.96v8.08M958.96 785h8.08M963 780.96v8.08M1039.96 785h8.08M1044 780.96v8.08M1187.96 785h8.08M1192 780.96v8.08M1250.96 785h8.08M1255 780.96v8.08M1324.96 785h8.08M1329 780.96v8.08M1402.96 785h8.08M1407 780.96v8.08M1545.96 785h8.08M1550 780.96v8.08M355.96 769h8.08M360 764.96v8.08M425.96 769h8.08M430 764.96v8.08M475.96 769h8.08M480 764.96v8.08M534.96 769h8.08M539 764.96v8.08M570.96 769h8.08M575 764.96v8.08M630.96 769h8.08M635 764.96v8.08M973.96 769h8.08M978 764.96v8.08M1069.96 769h8.08M1074 764.96v8.08M1108.96 769h8.08M1113 764.96v8.08M1177.96 769h8.08M1182 764.96v8.08M1255.96 769h8.08M1260 764.96v8.08M1466.96 769h8.08M1471 764.96v8.08M426.96 752h8.08M431 747.96v8.08M539.96 752h8.08M544 747.96v8.08M573.96 752h8.08M578 747.96v8.08M703.96 752h8.08M708 747.96v8.08M1093.96 752h8.08M1098 747.96v8.08M1270.96 752h8.08M1275 747.96v8.08M1476.96 752h8.08M1481 747.96v8.08M436.96 736h8.08M441 731.96v8.08M630.96 736h8.08M635 731.96v8.08M1038.96 736h8.08M1043 731.96v8.08M1167.96 736h8.08M1172 731.96v8.08M1274.96 736h8.08M1279 731.96v8.08M1496.96 736h8.08M1501 731.96v8.08M598.96 720h8.08M603 715.96v8.08M726.96 720h8.08M731 715.96v8.08M1187.96 720h8.08M1192 715.96v8.08M1270.96 720h8.08M1275 715.96v8.08M686.96 703h8.08M691 698.96v8.08M1101.96 703h8.08M1106 698.96v8.08M1206.96 703h8.08M1211 698.96v8.08M1299.96 703h8.08M1304 698.96v8.08M1118.96 687h8.08M1123 682.96v8.08"/>
</g>
<g id="frame" fill="none" stroke="#ffffff" stroke-width="1.111" stroke-linecap="square">
<path d="M19.5 641.5H1785.5V842.5H19.5Z"/>
<path stroke-linecap="butt" d="M19.5 842.5v5.211M265.5 842.5v5.211M510.5 842.5v5.211M755.5 842.5v5.211M1000.5 842.5v5.211M1246.5 842.5v5.211M1491.5 842.5v5.211M1736.5 842.5v5.211"/>
</g>
<g id="ticklabels" fill="#ffffff" font-size="13.89" text-anchor="middle">
<text x="20.38" y="862">0</text>
<text x="264.61" y="862">50</text>
<text x="509.83" y="862">100</text>
<text x="755.05" y="862">150</text>
<text x="1000.28" y="862">200</text>
<text x="1245.51" y="862">250</text>
<text x="1490.73" y="862">300</text>
<text x="1735.96" y="862">350</text>
<text x="902.19" y="882">Solar longitude (deg)</text>
</g>
</svg>
</body>
</html>
